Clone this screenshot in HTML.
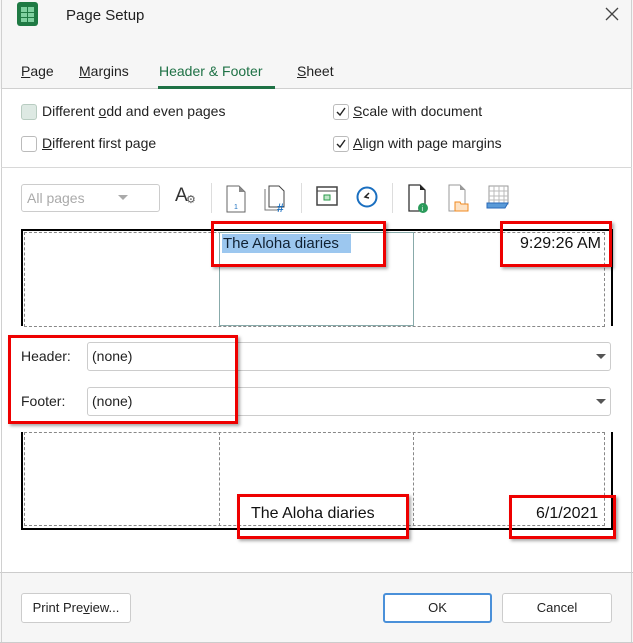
<!DOCTYPE html>
<html><head><style>
*{box-sizing:border-box;margin:0;padding:0}
body{width:633px;height:643px;position:relative;background:#fff;font-family:"Liberation Sans",sans-serif;font-size:14px;color:#222;overflow:hidden}
.a{position:absolute}
.t{position:absolute;white-space:nowrap;line-height:1}
.cb{position:absolute;width:16px;height:16px;border:1px solid #bbb;border-radius:3px;background:#fff}
.red{position:absolute;border:3px solid #e00;box-shadow:2px 2px 3px rgba(0,0,0,.35)}
.dash{position:absolute;border:1px dashed #888}
.combo{position:absolute;border:1px solid #ccc;border-radius:3px;background:#fff}
.arr{position:absolute;width:0;height:0;border-left:6px solid transparent;border-right:6px solid transparent;border-top:6px solid #555}
.btn{position:absolute;border:1px solid #ccc;border-radius:3px;background:#fff;text-align:center;line-height:27px;font-size:13px}
</style></head><body>
<div class="a" style="left:0;top:0;width:633px;height:89px;background:#f6f6f6"></div>
<div class="a" style="left:0;top:572px;width:633px;height:71px;background:#f6f6f6;border-top:1px solid #ccc"></div>
<div class="a" style="left:1px;top:0;width:1px;height:643px;background:#d0d0d0"></div>
<div class="a" style="left:631px;top:0;width:1px;height:643px;background:#d0d0d0"></div>
<div class="a" style="left:0;top:642px;width:633px;height:1px;background:#ccc"></div>
<!-- logo -->
<svg class="a" style="left:17px;top:2px" width="22" height="25"><rect x="0" y="0" width="21" height="24" rx="3" fill="#1f7a44"/><rect x="4" y="5" width="6" height="5" fill="#7fd0a0"/><rect x="11" y="5" width="6" height="5" fill="#7fd0a0"/><rect x="4" y="11" width="6" height="4" fill="#7fd0a0"/><rect x="11" y="11" width="6" height="4" fill="#7fd0a0"/><rect x="4" y="16" width="6" height="4" fill="#7fd0a0"/><rect x="11" y="16" width="6" height="4" fill="#7fd0a0"/></svg>
<div class="t" style="left:66px;top:8px;font-size:15px">Page Setup</div>
<svg class="a" style="left:604px;top:6px" width="16" height="16"><path d="M2 2L14 14M14 2L2 14" stroke="#444" stroke-width="1.3"/></svg>
<!-- tabs -->
<div class="t" style="left:21px;top:64px"><u>P</u>age</div>
<div class="t" style="left:79px;top:64px"><u>M</u>argins</div>
<div class="t" style="left:159px;top:64px;color:#1e7145">Header &amp; Footer</div>
<div class="t" style="left:297px;top:64px"><u>S</u>heet</div>
<div class="a" style="left:1px;top:88px;width:631px;height:1px;background:#d0d0d0"></div>
<div class="a" style="left:158px;top:86px;width:117px;height:3px;background:#1e7145"></div>
<!-- checks -->
<div class="cb" style="left:21px;top:104px;background:#dde9e3;border-color:#b8ccc1"></div>
<div class="t" style="left:42px;top:104px">Different <u>o</u>dd and even pages</div>
<div class="cb" style="left:21px;top:136px"></div>
<div class="t" style="left:42px;top:136px"><u>D</u>ifferent first page</div>
<div class="cb" style="left:333px;top:104px"></div>
<svg class="a" style="left:333px;top:104px" width="16" height="16"><path d="M4 8L7 11L12 4" stroke="#222" stroke-width="1.4" fill="none"/></svg>
<div class="t" style="left:353px;top:104px"><u>S</u>cale with document</div>
<div class="cb" style="left:333px;top:136px"></div>
<svg class="a" style="left:333px;top:136px" width="16" height="16"><path d="M4 8L7 11L12 4" stroke="#222" stroke-width="1.4" fill="none"/></svg>
<div class="t" style="left:353px;top:136px"><u>A</u>lign with page margins</div>
<div class="a" style="left:1px;top:167px;width:631px;height:1px;background:#d8d8d8"></div>
<!-- toolbar -->
<div class="combo" style="left:21px;top:184px;width:139px;height:28px"></div>
<div class="t" style="left:27px;top:191px;color:#aaa">All pages</div>
<div class="arr" style="left:118px;top:195px;border-top-color:#aaa;border-left-width:5px;border-right-width:5px;border-top-width:5px"></div>
<div class="t" style="left:175px;top:186px;font-size:19px;color:#333">A</div>
<div class="t" style="left:186px;top:195px;font-size:11px;color:#555">⚙</div>
<div class="a" style="left:211px;top:183px;width:1px;height:30px;background:#ddd"></div>
<svg class="a" style="left:224px;top:185px" width="24" height="28"><path d="M3 1H15L21 7V27H3Z" fill="#fff" stroke="#666"/><path d="M15 1V7H21" fill="#888"/><text x="10" y="24" font-size="7" fill="#1a6fc0" font-family="Liberation Sans">1</text></svg>
<svg class="a" style="left:263px;top:184px" width="26" height="28"><path d="M2 5V26H16" fill="none" stroke="#777"/><path d="M6 2H16L21 7V23H6Z" fill="#fff" stroke="#444"/><text x="14" y="28" font-size="12" fill="#1a6fc0" font-family="Liberation Sans" font-weight="bold">#</text></svg>
<div class="a" style="left:301px;top:183px;width:1px;height:30px;background:#ddd"></div>
<svg class="a" style="left:316px;top:186px" width="22" height="22"><rect x="1" y="1" width="20" height="18" fill="#fff" stroke="#444" stroke-width="1.5"/><path d="M1 5H21" stroke="#444"/><rect x="8" y="9" width="6" height="5" fill="#bfe6c9" stroke="#2a9a4a"/></svg>
<svg class="a" style="left:355px;top:185px" width="24" height="24"><circle cx="12" cy="12" r="9.5" fill="#fff" stroke="#1a6fc0" stroke-width="2"/><path d="M14 8L10 12L14 13" stroke="#222" stroke-width="1.5" fill="none"/></svg>
<div class="a" style="left:392px;top:183px;width:1px;height:30px;background:#ddd"></div>
<svg class="a" style="left:406px;top:184px" width="26" height="30"><path d="M3 1H14L19 6V27H3Z" fill="#fff" stroke="#333" stroke-width="1.3"/><path d="M14 1V6H19" fill="#222"/><circle cx="17" cy="24" r="5" fill="#2a9a5a"/><text x="15.5" y="27" font-size="7" fill="#fff" font-family="Liberation Sans">i</text></svg>
<svg class="a" style="left:446px;top:184px" width="26" height="30"><path d="M3 1H14L19 6V27H3Z" fill="#fff" stroke="#999"/><path d="M14 1V6H19" fill="#999"/><path d="M9 18H14L15 20H22V27H9Z" fill="#fde2c4" stroke="#f08a20"/></svg>
<svg class="a" style="left:486px;top:185px" width="24" height="26"><rect x="3" y="1" width="19" height="18" fill="#fff" stroke="#999"/><path d="M3 6H22M3 11H22M3 15H22M8 1V19M13 1V19M18 1V19" stroke="#bbb"/><path d="M1 18H22L19 23H1Z" fill="#5a9ad8" stroke="#2a6ab8"/></svg>
<!-- header preview -->
<div class="a" style="left:21px;top:229px;width:592px;height:97px;border:2px solid #000;border-bottom:none"></div>
<div class="dash" style="left:24px;top:232px;width:581px;height:95px"></div>
<div class="a" style="left:219px;top:232px;width:195px;height:94px;border:1px solid #8aa"></div>
<div class="a" style="left:222px;top:234px;width:129px;height:19px;background:#9cc7ef"></div>
<div class="t" style="left:223px;top:236px;font-size:15px;color:#123">The Aloha diaries</div>
<div class="t" style="left:520px;top:236px;font-size:16px;color:#111">9:29:26 AM</div>
<div class="red" style="left:211px;top:221px;width:175px;height:46px"></div>
<div class="red" style="left:500px;top:221px;width:112px;height:46px"></div>
<!-- combos -->
<div class="t" style="left:21px;top:349px">Header:</div>
<div class="combo" style="left:87px;top:342px;width:524px;height:29px"></div>
<div class="t" style="left:92px;top:349px">(none)</div>
<div class="arr" style="left:596px;top:354px;border-left-width:5px;border-right-width:5px;border-top-width:5px"></div>
<div class="t" style="left:21px;top:394px">Footer:</div>
<div class="combo" style="left:87px;top:387px;width:524px;height:29px"></div>
<div class="t" style="left:92px;top:394px">(none)</div>
<div class="arr" style="left:596px;top:399px;border-left-width:5px;border-right-width:5px;border-top-width:5px"></div>
<div class="red" style="left:8px;top:335px;width:230px;height:89px"></div>
<!-- footer preview -->
<div class="a" style="left:21px;top:432px;width:592px;height:98px;border:2px solid #000;border-top:none"></div>
<div class="dash" style="left:24px;top:432px;width:581px;height:94px"></div>
<div class="a" style="left:219px;top:432px;width:0;height:94px;border-left:1px dashed #888"></div>
<div class="a" style="left:413px;top:432px;width:0;height:94px;border-left:1px dashed #888"></div>
<div class="t" style="left:251px;top:506px;font-size:16px;color:#111">The Aloha diaries</div>
<div class="t" style="left:536px;top:506px;font-size:16px;color:#111">6/1/2021</div>
<div class="red" style="left:237px;top:494px;width:172px;height:45px"></div>
<div class="red" style="left:509px;top:495px;width:107px;height:44px"></div>
<!-- buttons -->
<div class="btn" style="left:21px;top:593px;width:110px;height:30px">Print Pre<u>v</u>iew...</div>
<div class="btn" style="left:383px;top:593px;width:109px;height:30px;border:2px solid #4a90d9;line-height:26px">OK</div>
<div class="btn" style="left:502px;top:593px;width:110px;height:30px">Cancel</div>
</body></html>
